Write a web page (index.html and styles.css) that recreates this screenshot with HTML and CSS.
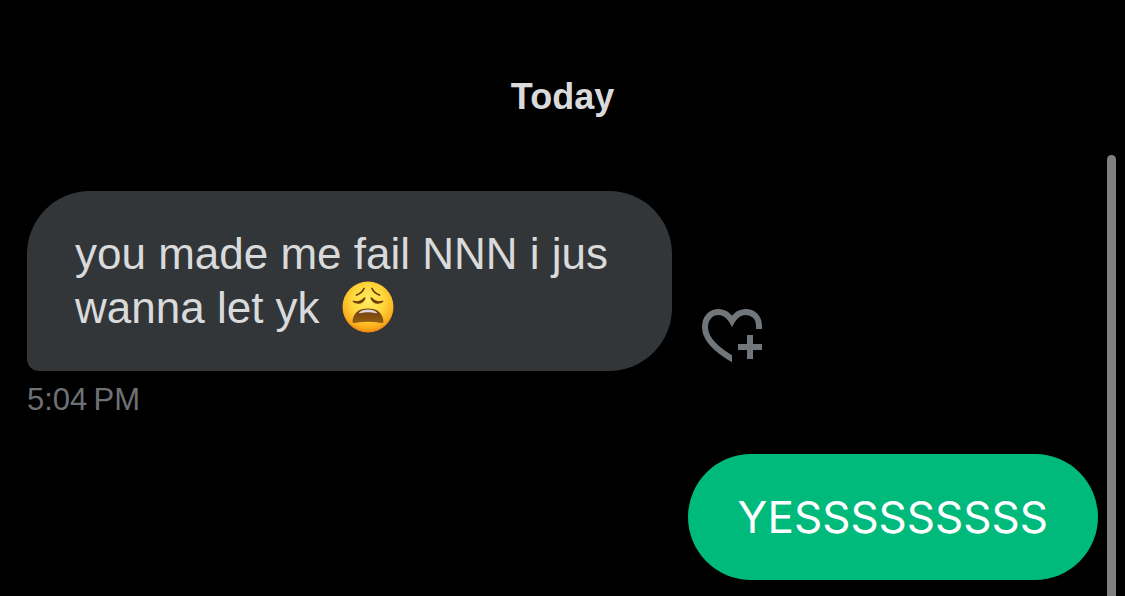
FILE: index.html
```html
<!DOCTYPE html>
<html lang="en">
<head>
    <meta charset="UTF-8">
    <meta name="viewport" content="width=device-width, initial-scale=1.0">
    <title>Messages</title>
    <link rel="stylesheet" href="styles.css">
</head>
<body>
    <main class="chat">
        <h2 class="day">Today</h2>

        <div class="message received">
            <div class="row">
                <p class="bubble">you made me fail NNN i jus wanna let yk
                    <svg class="emoji" viewBox="0 0 52 52" role="img" aria-label="weary face">
                        <defs>
                            <radialGradient id="face" cx="50%" cy="38%" r="64%">
                                <stop offset="0" stop-color="#ffec60"/>
                                <stop offset="0.5" stop-color="#ffd63c"/>
                                <stop offset="0.8" stop-color="#fdb21f"/>
                                <stop offset="1" stop-color="#e8820c"/>
                            </radialGradient>
                            <linearGradient id="mouth" x1="0" y1="0" x2="0" y2="1">
                                <stop offset="0" stop-color="#6b3a12"/>
                                <stop offset="1" stop-color="#946010"/>
                            </linearGradient>
                        </defs>
                        <circle cx="26" cy="26" r="25.5" fill="url(#face)"/>
                        <g fill="none" stroke="#6b3d08" stroke-width="1.8" stroke-linecap="round">
                            <path d="M14.500 14Q20 12 22 7.500"/>
                            <path d="M37.500 14Q32 12 30 7.500"/>
                        </g>
                        <g fill="#6b3d08">
                            <path d="M11 19.500Q17 22 22 16.500Q23.500 15.500 23.500 17.500Q21 23 16 22.800Q12 22.500 10.500 20.500Z"/>
                            <path d="M41 19.500Q35 22 30 16.500Q28.500 15.500 28.500 17.500Q31 23 36 22.800Q40 22.500 41.500 20.500Z"/>
                        </g>
                        <path d="M10.500 40.500C11 32 17 27.500 26 27.500S41 32 41.500 40.500Q41.500 42.500 39.500 42Q26 39.500 12.500 42Q10.500 42.500 10.500 40.500Z" fill="url(#mouth)"/>
                        <path d="M17 31.500Q20 28.500 26 28.500T35 31.500Q35.500 32.300 34 32.200Q26 30.500 18 32.200Q16.500 32.300 17 31.500Z" fill="#ddd5d8"/>
                    </svg></p>
                <button class="react" type="button" aria-label="Add reaction">
                    <svg viewBox="0 0 60 54" aria-hidden="true">
                        <clipPath id="heart">
                            <path d="M0 0h60v30H30v24H0z"/>
                        </clipPath>
                        <path d="M57 20V17C57 8 51 3 43.500 3C38 3 33.500 6 30 12C26.500 6 22 3 16.500 3C9 3 3 9 3 18C3 29 12 40 34 52" fill="none" stroke="#71767b" stroke-width="6" clip-path="url(#heart)"/>
                        <path d="M45 26h6v9h9v6h-9v9h-6v-9h-9v-6h9z" fill="#71767b"/>
                    </svg>
                </button>
            </div>
            <time class="time" datetime="17:04">5:04&#8201;PM</time>
        </div>

        <div class="message sent">
            <p class="bubble">YESSSSSSSSS</p>
        </div>
    </main>
    <div class="scroll-thumb"></div>
</body>
</html>
```
FILE: styles.css
```css
* {
    box-sizing: border-box;
}
body {
    margin: 0;
    background-color: #000;
    color: #d9dadb;
    font-family: "Liberation Sans", Arial, sans-serif;
}
.chat {
    display: flex;
    flex-direction: column;
    gap: 36px;
    padding: 75px 27px 16px;
}
.day {
    margin: 0 0 37px;
    font-size: 36px;
    line-height: 43px;
    text-align: center;
}
.message {
    display: flex;
    flex-direction: column;
    align-items: flex-start;
    gap: 11px;
}
.sent {
    align-items: flex-end;
}
.row {
    display: flex;
    align-items: flex-end;
    gap: 30px;
}
.bubble {
    max-width: 645px;
    margin: 0;
    padding: 36px 48px;
    border-radius: 63px;
    font-size: 44px;
    line-height: 54px;
}
.received .bubble {
    background-color: #333639;
    border-bottom-left-radius: 12px;
}
.sent .bubble {
    padding: 36px 50px;
    background-color: #00ba7c;
    color: #fff;
    font-family: Inter, Arial, sans-serif;
}
.emoji {
    width: 52px;
    height: 52px;
    margin-left: 10px;
    vertical-align: top;
}
.react {
    margin-bottom: 8px;
    padding: 0;
    border: 0;
    background: none;
    cursor: pointer;
}
.react svg {
    display: block;
    width: 60px;
    height: 54px;
}
.time {
    color: #6e7175;
    font-size: 31px;
    line-height: 36px;
}
.scroll-thumb {
    position: fixed;
    top: 155px;
    right: 9px;
    bottom: 0;
    width: 9px;
    border-radius: 5px 5px 0 0;
    background-color: #808080;
}
```
